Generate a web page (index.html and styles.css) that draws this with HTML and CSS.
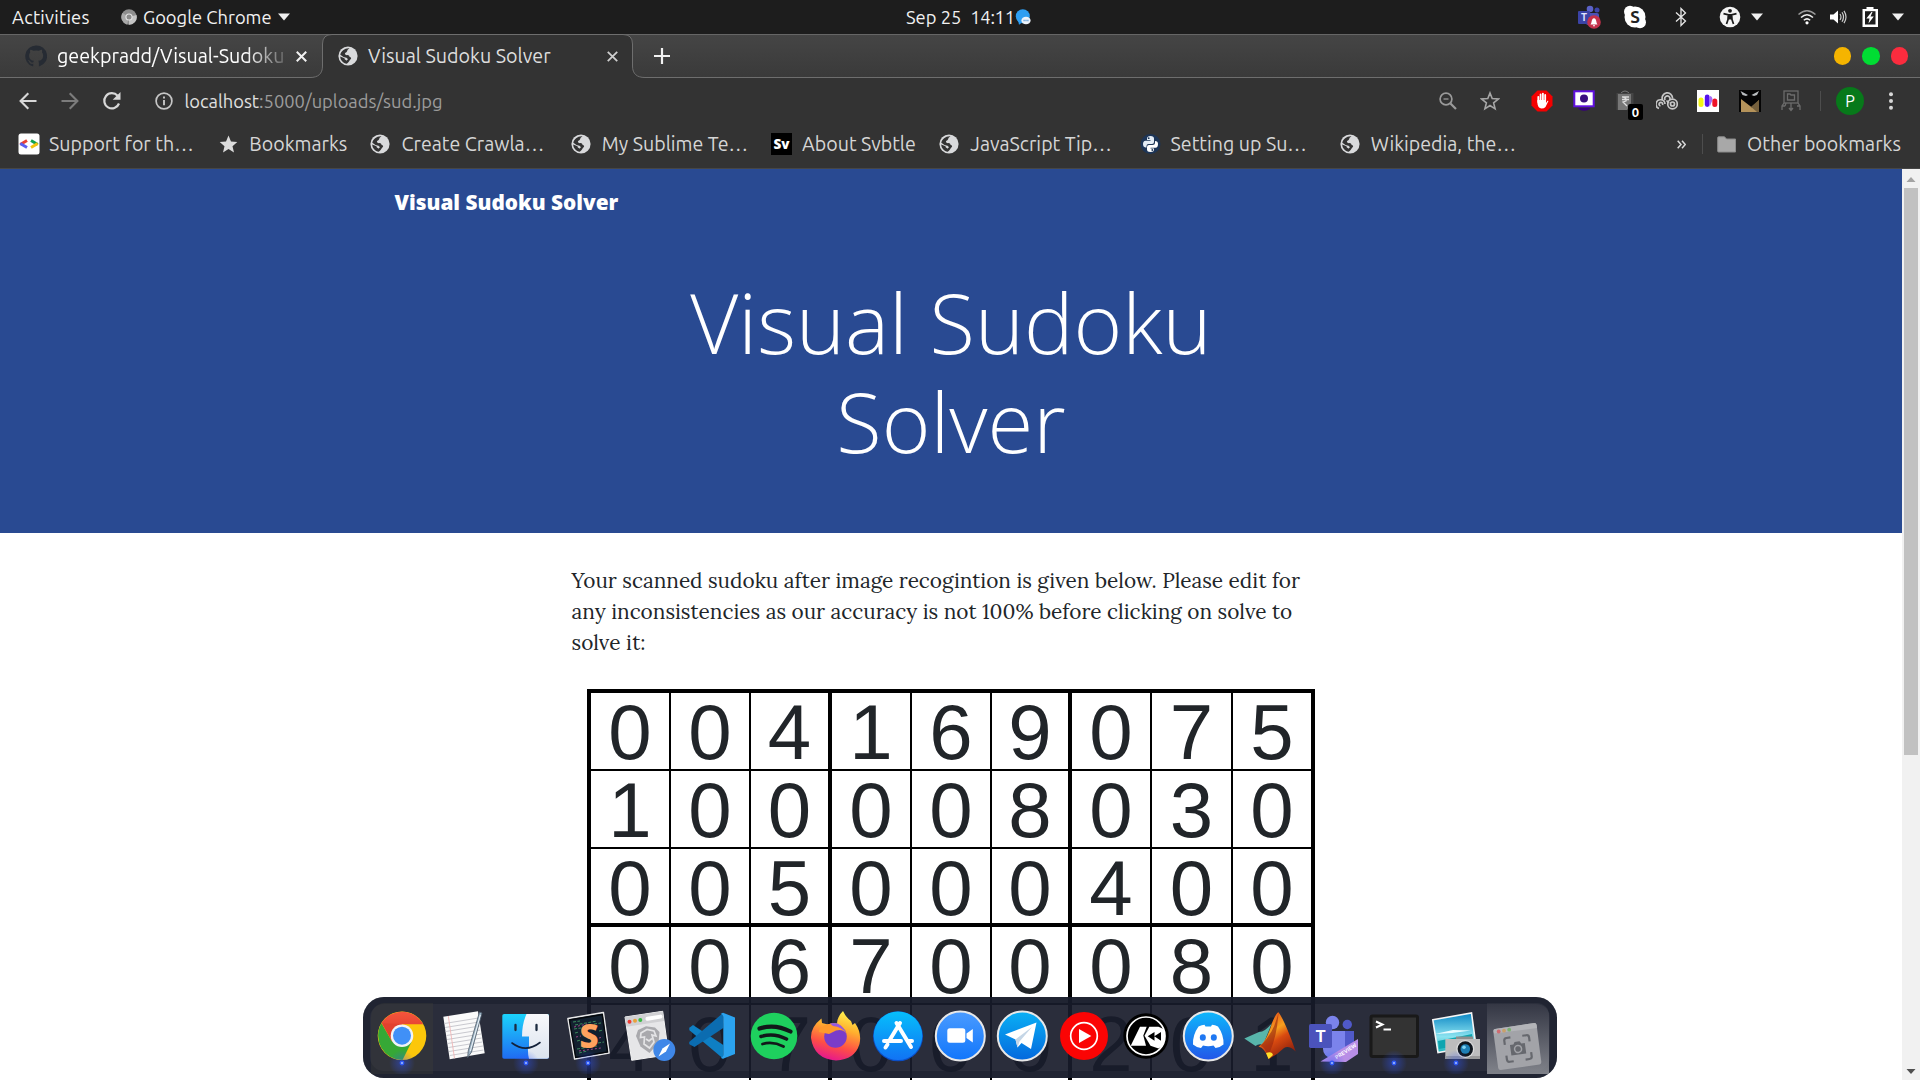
FILE: index.html
```html
<!DOCTYPE html>
<html lang="en">
<head>
<meta charset="utf-8">
<title>Visual Sudoku Solver</title>
<link rel="stylesheet" href="styles.css">
</head>
<body>
<svg width="0" height="0" class="defs">
  <defs>
    <symbol id="globe" viewBox="0 0 20 20"><circle cx="10" cy="10" r="9.600" fill="#d9dadc"/><path d="M11.500 2.300C8.500 4 9.800 5.700 7.800 6.600C6.300 7.300 6.900 8.800 8.300 9.200C10.200 8.700 11.500 9.600 11.600 11C13.200 11.200 13.600 12.400 12.600 13.300C11.600 14.300 11 16 8.800 17.700C5.200 17.300 2.300 14.200 2.200 10.500L6.500 12.300C6.500 14 8 13.500 8.200 14.800L10 13.200C9 12 8.500 11.500 5.500 11L2.300 8.800C3 5 7 1.800 11.500 2.300Z" fill="#333"/></symbol>
    <linearGradient id="gFinder" x1="0" y1="0" x2="0" y2="1"><stop offset="0" stop-color="#1bd3fb"/><stop offset="1" stop-color="#1f6cf2"/></linearGradient>
    <linearGradient id="gFinder2" x1="0" y1="0" x2="0" y2="1"><stop offset="0" stop-color="#f8f9fb"/><stop offset="1" stop-color="#dbe3ef"/></linearGradient>
    <linearGradient id="gFire" x1=".7" y1="0" x2=".4" y2="1"><stop offset="0" stop-color="#fff44f"/><stop offset=".35" stop-color="#ffb02e"/><stop offset=".7" stop-color="#ff4f45"/><stop offset="1" stop-color="#e5178f"/></linearGradient>
    <linearGradient id="gStore" x1="0" y1="0" x2="0" y2="1"><stop offset="0" stop-color="#06bffb"/><stop offset="1" stop-color="#1173f4"/></linearGradient>
    <linearGradient id="gZoom" x1="0" y1="0" x2="0" y2="1"><stop offset="0" stop-color="#4a9bff"/><stop offset="1" stop-color="#1176fb"/></linearGradient>
    <linearGradient id="gTele" x1="0" y1="0" x2="0" y2="1"><stop offset="0" stop-color="#0ab0f5"/><stop offset="1" stop-color="#0468dd"/></linearGradient>
    <linearGradient id="gDisc" x1="0" y1="0" x2="0" y2="1"><stop offset="0" stop-color="#0db8fc"/><stop offset="1" stop-color="#2355e8"/></linearGradient>
    <linearGradient id="gMat" x1=".3" y1="0" x2=".8" y2="1"><stop offset="0" stop-color="#e8501a"/><stop offset=".35" stop-color="#f6a01e"/><stop offset=".55" stop-color="#d94a10"/><stop offset="1" stop-color="#7c170c"/></linearGradient>
    <linearGradient id="gSky" x1="0" y1="0" x2="0" y2="1"><stop offset="0" stop-color="#0b86c4"/><stop offset=".6" stop-color="#8be3f0"/><stop offset="1" stop-color="#1eb3bb"/></linearGradient>
    <linearGradient id="gRed" x1="0" y1="0" x2="0" y2="1"><stop offset="0" stop-color="#f5553c"/><stop offset="1" stop-color="#dc3a2b"/></linearGradient>
    <radialGradient id="gDot"><stop offset="0" stop-color="#2f55ff" stop-opacity=".45"/><stop offset="1" stop-color="#2f55ff" stop-opacity="0"/></radialGradient>
    <symbol id="run" viewBox="0 0 40 40"><circle cx="20" cy="20" r="13" fill="url(#gDot)"/><circle cx="20" cy="20" r="2.400" fill="#2f59f5"/><circle cx="20" cy="20" r="1" fill="#a9c0ff"/></symbol>
  </defs>
</svg>

<header class="topbar">
  <span class="activities">Activities</span>
  <svg class="app-icon" viewBox="0 0 16 16"><circle cx="8" cy="8" r="7.700" fill="#8d8d8d"/><path d="M8 8L1.500 4A7.700 7.700 0 0 0 6 15.400Z" fill="#a9a9a9"/><path d="M8 8L15.500 6A7.700 7.700 0 0 1 8 15.700Z" fill="#c4c4c4"/><circle cx="8" cy="8" r="3.600" fill="#e4e4e4"/><circle cx="8" cy="8" r="2.500" fill="#8a8a8a"/></svg>
  <span class="app-name">Google Chrome</span>
  <svg class="caret" viewBox="0 0 12 8"><path d="M0 .5H12L6 7.500Z" fill="#f0f0f0"/></svg>
  <div class="clock"><span>Sep 25</span><span class="time">14:11</span>
    <svg width="16" height="16" viewBox="0 0 16 16"><path d="M3 11L4 15.700L8 13Z" fill="#2b9bf0"/><circle cx="7.800" cy="7.200" r="7" fill="#2f9ff2"/><ellipse cx="11" cy="11.500" rx="4.600" ry="3.800" fill="#eef4fb"/><path d="M8.500 11.500h5" stroke="#5b9bd8" stroke-width="1.600" stroke-dasharray="1.200 .7"/></svg>
  </div>
  <div class="tray">
    <span class="slot s46"><svg width="24" height="24" viewBox="0 0 24 24"><circle cx="13" cy="4" r="3.300" fill="#5b62c8"/><circle cx="20" cy="5" r="2.500" fill="#3c44a8"/><rect x="9" y="8" width="13" height="12" rx="2" fill="#4a50b5"/><rect x="1" y="6" width="12" height="13" rx="1" fill="#3b43a6"/><text x="4" y="16" class="ic-bold" font-size="10" fill="#e6e6ff">T</text><circle cx="17" cy="17" r="6.800" fill="#c4314b"/><path d="M13.500 19.500C15 18 14.300 13.500 17 13.300C19.700 13.500 19 18 20.500 19.500Z" fill="#fff"/><path d="M16 20.300h2v1h-2z" fill="#fff"/></svg></span>
    <span class="slot s46"><svg width="24" height="24" viewBox="0 0 24 24"><circle cx="12" cy="12" r="10.500" fill="#fff"/><circle cx="7" cy="6.800" r="6" fill="#fff"/><circle cx="17" cy="17.200" r="6" fill="#fff"/><text x="12" y="18" class="ic-bold" text-anchor="middle" font-size="17" fill="#222">S</text></svg></span>
    <span class="slot s46"><svg width="14" height="20" viewBox="0 0 14 20"><path d="M2 5.500L11.500 14L7 18.500V1.500L11.500 6L2 14.500" fill="none" stroke="#e8e8e8" stroke-width="1.300"/></svg></span>
    <span class="slot s40"><svg width="22" height="22" viewBox="0 0 22 22"><circle cx="11" cy="11" r="10.300" fill="#f5f5f5"/><circle cx="11" cy="4.800" r="1.900" fill="#1d1d1d"/><path d="M4.500 7.600L9.500 8.800H12.500L17.500 7.600M11 9V13M9.300 9L9 13.500L7.500 18M12.700 9L13 13.500L14.500 18" fill="none" stroke="#1d1d1d" stroke-width="1.700"/><path d="M9 8.500h4v5H9z" fill="#1d1d1d"/></svg></span>
    <span class="slot s14"><svg width="12" height="8" viewBox="0 0 12 8"><path d="M0 .5H12L6 7.500Z" fill="#f0f0f0"/></svg></span>
    <span class="slot s30 gap28"><svg width="20" height="16" viewBox="0 0 20 16" fill="none" stroke-width="1.500"><path d="M1.500 5.500Q10-2 18.500 5.500" stroke="#999"/><path d="M4 8.500Q10 3 16 8.500M6.800 11.300Q10 8.500 13.200 11.300" stroke="#eee"/><circle cx="10" cy="13.800" r="1.600" fill="#fff"/></svg></span>
    <span class="slot s32"><svg width="18" height="16" viewBox="0 0 18 16"><path d="M1 5.500H4.500L9 1.500V14.500L4.500 10.500H1Z" fill="#fff"/><path d="M11 5Q13 8 11 11M13 3.300Q16 8 13 12.700M15 1.800Q19 8 15 14.200" fill="none" stroke="#ccc" stroke-width="1.200"/></svg></span>
    <span class="slot s32"><svg width="18" height="22" viewBox="0 0 18 22"><path d="M5.500 1H12.500V3H17V21H1.500V3H5.500Z" fill="#fff"/><path d="M4 5.200H14.500V18.500H4Z" fill="#1d1d1d"/><path d="M10.500 6L5.300 12.500H8.500L7.500 17.500L12.800 10.500H9.500L11.500 6Z" fill="#fff"/></svg></span>
    <span class="slot s24"><svg width="12" height="8" viewBox="0 0 12 8"><path d="M0 .5H12L6 7.500Z" fill="#f0f0f0"/></svg></span>
  </div>
</header>

<div class="tabs">
  <div class="tab tab-idle">
    <svg width="22" height="22" viewBox="0 0 16 16"><path d="M8 .3a7.800 7.800 0 0 0-2.500 15.200c.4.100.5-.2.500-.4v-1.400c-2.200.5-2.700-1-2.700-1-.3-.9-.8-1.100-.8-1.100-.7-.5.100-.5.100-.5.800.1 1.200.8 1.200.8.700 1.200 1.800.9 2.300.7.100-.5.300-.9.500-1.100-1.800-.2-3.600-.9-3.600-3.900 0-.9.300-1.600.8-2.100-.1-.2-.4-1 .1-2.100 0 0 .7-.2 2.200.8a7.600 7.600 0 0 1 4 0c1.500-1 2.200-.8 2.200-.8.400 1.100.100 1.900.100 2.100.5.500.8 1.200.8 2.100 0 3-1.900 3.700-3.600 3.900.3.200.5.700.5 1.500v2.100c0 .2.100.5.600.4A7.800 7.800 0 0 0 8 .3Z" fill="#262b33"/></svg>
    <span class="tab-title fade">geekpradd/Visual-Sudoku</span>
    <svg class="x" viewBox="0 0 10 10"><path d="M.7.7L9.300 9.300M9.300.7L.7 9.300" stroke="#f2f2f2" stroke-width="1.800"/></svg>
  </div>
  <div class="tab tab-active">
    <svg class="tab-shape" width="335" height="44" viewBox="0 0 335 44"><path d="M0 44V43.500C8 43.500 12.500 40 12.500 32V10Q12.500 .5 22 .5H313Q322.500 .5 322.500 10V32C322.500 40 327 43.500 335 43.500V44Z" fill="#333"/><path d="M0 43.500C8 43.500 12.500 40 12.500 32V10Q12.500 .5 22 .5H313Q322.500 .5 322.500 10V32C322.500 40 327 43.500 335 43.500" fill="none" stroke="#6e6e6e"/></svg>
    <svg class="ico" width="20" height="20"><use href="#globe"/></svg>
    <span class="tab-title">Visual Sudoku Solver</span>
    <svg class="x" viewBox="0 0 10 10"><path d="M.7.7L9.300 9.300M9.300.7L.7 9.300" stroke="#cfcfcf" stroke-width="1.600"/></svg>
  </div>
  <svg class="plus" width="16" height="16" viewBox="0 0 16 16"><path d="M8 0V16M0 8H16" stroke="#f2f2f2" stroke-width="2.200"/></svg>
  <div class="winbtns"><i class="yellow"></i><i class="green"></i><i class="red"></i></div>
</div>

<div class="toolbar">
  <svg class="nav" width="18" height="18" viewBox="0 0 18 18"><path d="M17.500 9H2M9.300 1.300L1.600 9L9.300 16.700" fill="none" stroke="#d8d8d8" stroke-width="2.100"/></svg>
  <svg class="nav" width="18" height="18" viewBox="0 0 18 18"><path d="M.5 9H16M8.700 1.300L16.400 9L8.700 16.700" fill="none" stroke="#7c7c7c" stroke-width="2.100"/></svg>
  <svg class="nav reload" width="20" height="20" viewBox="0 0 20 20"><path d="M17 12.500A7.600 7.600 0 1 1 15.600 4.800" fill="none" stroke="#d8d8d8" stroke-width="2.200"/><path d="M18.500 1V8.800H10.700Z" fill="#d8d8d8"/></svg>
  <svg class="info" width="18" height="18" viewBox="0 0 18 18"><circle cx="9" cy="9" r="7.900" fill="none" stroke="#c6c6c6" stroke-width="1.700"/><path d="M9 8V13.200M9 4.500V6.500" stroke="#c6c6c6" stroke-width="1.900"/></svg>
  <span class="url">localhost<span class="path">:5000/uploads/sud.jpg</span></span>
  <div class="tools">
    <span class="slot s42"><svg width="18" height="18" viewBox="0 0 18 18" fill="none" stroke="#9a9a9a"><circle cx="7" cy="7" r="5.900" stroke-width="1.700"/><path d="M11.500 11.500L17 17" stroke-width="2.200"/><path d="M4.500 7H9.500" stroke-width="1.300"/></svg></span>
    <span class="slot s42"><svg width="20" height="20" viewBox="0 0 20 20"><path d="M10 2L12.200 7.600L18.300 8L13.600 11.900L15.100 17.800L10 14.500L4.900 17.800L6.400 11.900L1.700 8L7.800 7.600Z" fill="none" stroke="#a6a6a6" stroke-width="1.600"/></svg></span>
    <span class="slot ext first"><svg width="22" height="22" viewBox="0 0 22 22"><path d="M6.500 .5H15.500L21.500 6.500V15.500L15.500 21.500H6.500L.5 15.500V6.500Z" fill="#f40000"/><path d="M7.300 12V6.800M9.600 11V4.400M11.900 11V3.600M14.200 11V5" stroke="#fff" stroke-width="1.800" stroke-linecap="round"/><path d="M6.400 10H15V13L16.500 10.800Q17.800 10.300 17.200 11.500L14.500 17Q13 18.500 10.500 18.500Q6.700 18 6.400 13Z" fill="#fff"/></svg></span>
    <span class="slot ext"><svg width="22" height="22" viewBox="0 0 22 22"><rect x="1.300" y="1.300" width="19.400" height="15" fill="#fff" stroke="#6010e0" stroke-width="2"/><circle cx="11" cy="8.600" r="4" fill="#3a0f80"/><path d="M5 18H17.500Q16 20.800 11 20.800Q6.500 20.800 5 18Z" fill="#36007a"/></svg></span>
    <span class="slot ext"><svg width="22" height="22" viewBox="0 0 22 22"><path d="M7 3Q11-1 15 3" stroke="#777" fill="none"/><rect x="2.500" y="3" width="17" height="17" fill="#454545"/><path d="M4 4H17V13L13 20H4Z" fill="#777"/><path d="M8 7H15M8 9.500H15M9 7Q13 8 12 11L9 12L13 16" stroke="#ddd" fill="none" stroke-width="1.300"/></svg><b class="badge">0</b></span>
    <span class="slot ext"><svg width="22" height="18" viewBox="0 0 22 18" fill="none" stroke="#c6c6c6" stroke-width="1.700"><path d="M3 16.500A4.500 4.500 0 1 1 9 12M4.500 14A1.800 1.800 0 1 1 6.500 13M6.500 8A5.200 5.200 0 1 1 16.500 6.500M9.200 8A2.600 2.600 0 1 1 13.500 8M10.500 8.500L13 11"/><circle cx="16.500" cy="12" r="4.800"/><circle cx="16.500" cy="12" r="2"/></svg></span>
    <span class="slot ext"><svg width="22" height="22" viewBox="0 0 22 22"><path d="M0 0H22V22H0Z" fill="#fff"/><rect x="1.500" y="7.500" width="5" height="9.500" rx="2.500" fill="#f3f514"/><rect x="7.800" y="4.500" width="4.800" height="12.500" rx="2.400" fill="#5311ee"/><path d="M12.600 6Q15.500 6 15.500 10L12.600 17Z" fill="#a66bf5"/><rect x="15.300" y="8.500" width="5" height="8.500" rx="2.500" fill="#ee1228"/></svg></span>
    <span class="slot ext"><svg width="22" height="22" viewBox="0 0 22 22"><path d="M0 0H22V22H0Z" fill="#050505"/><path d="M2 22V9L13 17.500L20 10V22Z" fill="#b5935a"/><path d="M12 16.700L20 10V22H18Z" fill="#75603c"/><path d="M1.500 1L9 5L7 6L3.500 5ZM20 1L12.500 5L15 6L18 5Z" fill="#b9bcbf"/></svg></span>
    <span class="slot ext"><svg width="22" height="22" viewBox="0 0 22 22" fill="none" stroke="#6c6c6c" stroke-width="1.300"><rect x="4" y="1" width="14" height="12"/><path d="M7.500 4H10L11 5H14.500V10H7.500ZM4 13L2 16V20M2 16H5M18 13L20 16V20M20 16H17M11 13V20M9 18L11 20.500L13 18M6 13L5 16"/></svg></span>
    <span class="slot s17"><i class="vline"></i></span>
    <span class="slot s42"><span class="avatar">P</span></span>
    <span class="slot s40"><svg width="6" height="18" viewBox="0 0 6 18"><g fill="#d8d8d8"><circle cx="3" cy="2.200" r="2"/><circle cx="3" cy="9" r="2"/><circle cx="3" cy="15.800" r="2"/></g></svg></span>
  </div>
</div>

<div class="bookmarks">
  <div class="bm"><svg class="bi" viewBox="0 0 22 22"><rect x=".5" y=".5" width="21" height="21" rx="2.500" fill="#fff"/><g fill="none" stroke-width="3"><path d="M2.300 11.500L9 7.500" stroke="#ea4335"/><path d="M2.300 10.500L9 14.500" stroke="#5b5ff0"/><path d="M19.700 11.500L13 7.500" stroke="#12a150"/><path d="M19.700 10.500L13 14.500" stroke="#f4c20d"/></g></svg><span>Support for th…</span></div>
  <div class="bm sm"><svg class="bi" viewBox="0 0 22 22"><path d="M10.500 2.500L13 8.500L19.300 9L14.500 13.200L16 19.400L10.500 16L5 19.400L6.500 13.200L1.700 9L8 8.500Z" fill="#dcdcdc"/></svg><span>Bookmarks</span></div>
  <div class="bm"><svg class="bi" viewBox="0 0 22 22"><use href="#globe" x="0" y="1" width="20" height="20"/></svg><span>Create Crawla…</span></div>
  <div class="bm"><svg class="bi" viewBox="0 0 22 22"><use href="#globe" x="0" y="1" width="20" height="20"/></svg><span>My Sublime Te…</span></div>
  <div class="bm md"><svg class="bi" viewBox="0 0 22 22"><path d="M0 0H21V22H0Z" fill="#000"/><text x="10.500" y="16" text-anchor="middle" class="ic-heavy" font-size="13.500" fill="#fff">Sv</text></svg><span>About Svbtle</span></div>
  <div class="bm"><svg class="bi" viewBox="0 0 22 22"><use href="#globe" x="0" y="1" width="20" height="20"/></svg><span>JavaScript Tip…</span></div>
  <div class="bm"><svg class="bi" viewBox="0 0 22 22"><circle cx="10.500" cy="11" r="10" fill="#1d3557"/><path d="M7 5.500Q7 3 10.500 3Q14 3 14 5.500V9Q14 11 12 11H8.500Q6.500 11 6.500 13V14.500H5.500Q3 14 3 11Q3 8 5.500 7.700H10.500V7H7Z" fill="#e4edf6"/><path d="M14 16.500Q14 19 10.500 19Q7 19 7 16.500V14Q7 12 9 12H12.500Q15 12 15 9.500V8Q18 8 18 11Q18 14.500 15.500 14.800H10.500V15.500H14Z" fill="#fff"/><circle cx="8.700" cy="5.200" r=".9" fill="#1d3557"/><circle cx="12.300" cy="17" r=".9" fill="#1d3557"/></svg><span>Setting up Su…</span></div>
  <div class="bm"><svg class="bi" viewBox="0 0 22 22"><use href="#globe" x="0" y="1" width="20" height="20"/></svg><span>Wikipedia, the…</span></div>
  <div class="bm-right">
    <svg width="9" height="9" viewBox="0 0 9 9"><path d="M.7 .7L4 4.500L.7 8.300M5 .7L8.300 4.500L5 8.300" fill="none" stroke="#dadada" stroke-width="1.500"/></svg>
    <i class="vline"></i>
    <svg class="folder" width="20" height="17" viewBox="0 0 20 17"><path d="M1.500 .8H7.500L9.500 3H18.500V16H1.500Q.7 16 .7 15V1.800Q.7 .8 1.500 .8Z" fill="#a8a8a8" stroke="#8c8c8c"/></svg>
    <span>Other bookmarks</span>
  </div>
</div>

<div class="viewport">
  <main class="page">
    <div class="masthead">
      <nav class="brand">Visual Sudoku Solver</nav>
      <h1>Visual Sudoku Solver</h1>
    </div>
    <div class="content">
      <p>Your scanned sudoku after image recogintion is given below. Please edit for any inconsistencies as our accuracy is not 100% before clicking on solve to solve it:</p>
      <div class="grid">
        <b>0</b><b>0</b><b>4</b><b>1</b><b>6</b><b>9</b><b>0</b><b>7</b><b>5</b>
        <b>1</b><b>0</b><b>0</b><b>0</b><b>0</b><b>8</b><b>0</b><b>3</b><b>0</b>
        <b>0</b><b>0</b><b>5</b><b>0</b><b>0</b><b>0</b><b>4</b><b>0</b><b>0</b>
        <b>0</b><b>0</b><b>6</b><b>7</b><b>0</b><b>0</b><b>0</b><b>8</b><b>0</b>
        <b>4</b><b>0</b><b>7</b><b>0</b><b>0</b><b>0</b><b>2</b><b>0</b><b>1</b>
      </div>
    </div>
  </main>
  <div class="scrollbar">
    <svg width="18" height="19" viewBox="0 0 18 19"><path d="M9 8L13.500 13H4.500Z" fill="#a3a3a3"/></svg>
    <i class="thumb"></i>
    <svg class="down" width="18" height="18" viewBox="0 0 18 18"><path d="M9 12L13.500 7H4.500Z" fill="#505050"/></svg>
  </div>
</div>

<div class="dock">
  <svg class="tile warm" viewBox="0 0 62 71">
    <circle cx="31" cy="32.700" r="24.300" fill="#fcc70a"/>
    <path d="M31 32.700L10.500 20A24.300 24.300 0 0 1 52.200 21.300L31 21.300Z" fill="url(#gRed)"/>
    <path d="M31 32.700L40.500 39L31.500 57A24.300 24.300 0 0 1 10.500 20.300L21 38.500Z" fill="#36a836"/>
    <path d="M10.700 20.300L31 21L21 38.500Z" fill="#e2412e"/>
    <circle cx="31" cy="32.700" r="11.300" fill="#f1f3f6"/><circle cx="31" cy="32.700" r="9" fill="#4090f7"/>
    <use href="#run" x="11" y="40" width="40" height="40"/>
  </svg>
  <svg class="tile" viewBox="0 0 62 71">
    <path d="M10.300 13.700L45 8.300L51.700 50.300L16.700 56.300Z" fill="#fafafa"/>
    <path d="M11.500 20.500L45.500 15M12.200 24.500L46 19M12.800 28.500L46.700 23M13.500 32.500L47.300 27M14.100 36.500L48 31M14.700 40.500L48.600 35M15.400 44.500L49.200 39M16 48.500L49.900 43M16.700 52.500L50.500 47" stroke="#c9c9cf"/>
    <path d="M15.300 13L21.500 55.400" stroke="#f0b0b0" stroke-width=".8"/>
    <path d="M46.500 9L49 10L38.500 49L34.700 54.500L35.200 48Z" fill="#9db4c6" stroke="#4c5a68" stroke-width=".8"/><path d="M47.300 12L37.300 48" stroke="#eef4f8"/>
  </svg>
  <svg class="tile" viewBox="0 0 62 71">
    <rect x="7.300" y="11" width="46.700" height="44.700" rx="1.800" fill="url(#gFinder)"/>
    <path d="M31.500 11H52.200Q54 11 54 13V54Q54 55.700 52 55.700H34Q32.700 51 33 45H34V33.500H27Q27 21 31.500 11Z" fill="url(#gFinder2)"/>
    <path d="M20.500 22V27M41.500 22V27" stroke="#1c2b40" stroke-width="2.300" stroke-linecap="round"/><path d="M17 40Q31 50.500 45 39.500" fill="none" stroke="#13213a" stroke-width="1.600" stroke-linecap="round"/>
    <use href="#run" x="11" y="40" width="40" height="40"/>
  </svg>
  <svg class="tile" viewBox="0 0 62 71">
    <path d="M11 15.500L46.300 9.500L52 50L17.700 56Z" fill="#12202f" stroke="#e9e9e9" stroke-width="1.700" stroke-linejoin="round"/>
    <path d="M12.500 17L45.300 11.500L50.500 49L18.700 54.500Z" fill="none" stroke="#05080c" stroke-width="1.500"/>
    <path d="M16 19L23 18M18 22L40 18M17 26L24 25M37 21L44 20M18 30L22 29M42 28L46 27M20 38L24 37M41 40L47 39M20 46L40 43M22 50L30 48" stroke="#3b8a5c" stroke-width="1" stroke-dasharray="3 1.500"/><path d="M17 24L30 21M19 34L24 33M42 35L46 34M22 48L44 45" stroke="#a0448a" stroke-dasharray="2 2"/>
    <text x="32" y="45" text-anchor="middle" class="ic-heavy" font-size="33" fill="#ffa25e">S</text>
    <use href="#run" x="11" y="40" width="40" height="40"/>
  </svg>
  <svg class="tile" viewBox="0 0 62 71">
    <path d="M6 14L43.700 8.300L49.700 51.700L12.700 57.300Z" fill="#e6e6e8" stroke="#f4f4f4" stroke-width="1" stroke-linejoin="round"/>
    <path d="M6 14L43.700 8.300L45 18L7.500 23.700Z" fill="#d0d0d3"/>
    <path d="M28.500 15.800L41.500 13.600" stroke="#fff" stroke-width="4" stroke-linecap="round"/>
    <circle cx="10.500" cy="18.700" r="2" fill="#ee3b34"/><circle cx="16" cy="17.700" r="2" fill="#e9a13a"/><circle cx="21.300" cy="16.900" r="2" fill="#3cba45"/>
    <path d="M19 27L27 23.300L36 24.500L40.500 29L39.500 40L30.500 50L21.500 43.500L17 33Z" fill="#a9a9ad"/><path d="M22 30L28 26.500L35 28L37 33L33 32L35 39L30.500 45L25 41L25.500 34L21.500 34.500ZM27 36L30 38L33 35.500" fill="none" stroke="#e4e4e6" stroke-width="1.700"/>
    <circle cx="45.300" cy="47" r="11" fill="#3f87e8"/><path d="M51 40.500L47 48.500L39.500 53.500L43.500 45.500Z" fill="#fff"/>
  </svg>
  <svg class="tile" viewBox="0 0 62 71">
    <path d="M8.700 24.500Q7.500 26 8.700 27.500L42.300 55.700V42L12 22Z" fill="#0e7fc4"/><path d="M8.700 41.500Q7.500 40 8.700 38.500L42.300 9.700V25L13.500 44Z" fill="#0b6cb0"/><path d="M42 9.700L54 14.500V51L42 55.700Q40.500 55.500 39.500 54.500Q42.300 55 42.300 51.500V14Q42 11 39.500 11Z" fill="#2ba3ef"/>
  </svg>
  <svg class="tile" viewBox="0 0 62 71">
    <circle cx="31" cy="33" r="23.300" fill="#1ed05e"/><g fill="none" stroke="#12181a" stroke-linecap="round"><path d="M16.500 25.500Q32 20.500 47.500 28.500" stroke-width="4.200"/><path d="M18 33.500Q31 29.500 43.500 36" stroke-width="3.600"/><path d="M19.500 41Q30 38 40.500 43.500" stroke-width="2.800"/></g>
  </svg>
  <svg class="tile" viewBox="0 0 62 71">
    <path d="M6 35Q5.500 24 16.500 15.500L17 20L23 21.500Q28 19 32 20.500Q32.500 13 38 8Q41 14.500 46 18L47.500 22L50 20Q57 30 54.500 41Q50 56.500 31 57.500Q9 56 6 35Z" fill="url(#gFire)"/>
    <circle cx="30.500" cy="33.500" r="11.300" fill="#7a3cc9"/><path d="M20 22Q30 18 38 24L43 34Q40 25 31 27.500L24 31L14 29Q13 26 20 22Z" fill="#ff9a2b"/><path d="M25 20.500Q36 18 41 30Q37 24 28 23Z" fill="#9459e0"/>
  </svg>
  <svg class="tile" viewBox="0 0 62 71">
    <circle cx="31" cy="33.300" r="25" fill="#0a4fc9"/><circle cx="31" cy="32.700" r="24.300" fill="url(#gStore)"/><g stroke="#fff" stroke-width="4" stroke-linecap="round"><path d="M33 20L23 36.500M29.500 20L44 44M17 38H34M41 38H45M20.500 41.500L18.500 44.500"/></g>
  </svg>
  <svg class="tile" viewBox="0 0 62 71">
    <circle cx="31.300" cy="33" r="24.500" fill="url(#gZoom)" stroke="#e8e8e8" stroke-width="2"/><rect x="18.300" y="25.300" width="18" height="14.500" rx="2.500" fill="#fff"/><path d="M37.500 30.500L43.800 26V39.500L37.500 35Z" fill="#fff"/>
  </svg>
  <svg class="tile" viewBox="0 0 62 71">
    <circle cx="31.300" cy="33" r="24.500" fill="url(#gTele)" stroke="#e8e8e8" stroke-width="2"/><path d="M14 31.500L45.500 19.500L40 46L30.500 40L26.500 44.500L24.500 36.500Z" fill="#fff"/><path d="M24.500 36.500L41 24L28.500 38.500L26.500 44.500Z" fill="#c5d6e6"/>
  </svg>
  <svg class="tile" viewBox="0 0 62 71">
    <circle cx="31" cy="33" r="24" fill="#fb0404"/><circle cx="31" cy="33" r="13.300" fill="none" stroke="#fff" stroke-width="1.700"/><path d="M26 26V40L38.300 33Z" fill="#fff"/>
  </svg>
  <svg class="tile" viewBox="0 0 62 71">
    <circle cx="31" cy="33" r="22.700" fill="#000"/><circle cx="31" cy="33" r="19" fill="none" stroke="#fff" stroke-width="1.700"/><path d="M15.700 42.700L25 23.700H31.700L28.300 32.500L31 42.700Z" fill="#fff"/><path d="M34.300 23.700H43.500L48.500 26Q52 34 47.500 43L43.500 45.500L35.500 42.700L29.500 32.800Z" fill="#fff"/><path d="M39.500 29V37.700L32.700 33.300ZM46 29V37.700L39.300 33.300Z" fill="#000"/>
  </svg>
  <svg class="tile" viewBox="0 0 62 71">
    <circle cx="31.300" cy="33" r="24.500" fill="url(#gDisc)" stroke="#e8e8e8" stroke-width="2"/><path d="M21.500 23.500Q25 22 27.500 21.800L28.500 23.500H34L35 21.800Q38 22 41 23.500Q47 32 46.500 41.500Q43 44.500 38.500 45L36.500 42.500Q31.300 44 26 42.500L24 45Q19.500 44.500 16 41.500Q15.500 32 21.500 23.500Z" fill="#fff"/><ellipse cx="25.800" cy="34.500" rx="3" ry="3.300" fill="#1f78f2"/><ellipse cx="36.800" cy="34.500" rx="3" ry="3.300" fill="#1f78f2"/>
  </svg>
  <svg class="tile" viewBox="0 0 62 71">
    <path d="M5.300 35.500L20 29Q26 29 33 20L24 42Q20 40 16.500 43Z" fill="#58b5ab"/><path d="M39.500 9.300Q46 18 56.700 48.500Q50 42 45 45Q38 52 29.500 56Q26 45 19.500 43.500Q27 40 33 20Q37 10 39.500 9.300Z" fill="url(#gMat)"/><path d="M39.500 9.300Q35 30 21.500 43Q26 44 29 53Q38 35 39.500 9.300Z" fill="#9a2a10" opacity=".65"/><path d="M27 50Q33 48 34 52L29.500 56Z" fill="#ffe02a"/>
  </svg>
  <svg class="tile" viewBox="0 0 62 71">
    <circle cx="31.500" cy="19.500" r="6.700" fill="#7b83eb"/><circle cx="46.300" cy="21.500" r="4.700" fill="#5059c9"/><path d="M37 28H53V42Q51 50 44 49Z" fill="#5059c9"/><path d="M22 28H44V48Q41 57 31 56Q22 53 22 46Z" fill="#7b83eb"/><path d="M19.500 58.500L57 36V51L45 59Z" fill="#b88ee6"/><text transform="translate(35.500 56.500) rotate(-33)" class="ic-bold" font-size="5.500" fill="#fff">PREVIEW</text><rect x="8" y="21" width="23" height="24" rx="1.800" fill="#4b53bc"/><text x="19.500" y="39.300" text-anchor="middle" class="ic-bold" font-size="17" fill="#fff">T</text>
    <use href="#run" x="11" y="40" width="40" height="40"/>
  </svg>
  <svg class="tile" viewBox="0 0 62 71">
    <rect x="8" y="13" width="46.500" height="40.500" rx="1.500" fill="#333" stroke="#191919" stroke-width="3"/><path d="M13 18.500L19.500 21.500L13 24.500" fill="none" stroke="#fff" stroke-width="2"/><path d="M20.500 26.500H28" stroke="#fff" stroke-width="2"/>
    <use href="#run" x="11" y="40" width="40" height="40"/>
  </svg>
  <svg class="tile" viewBox="0 0 62 71">
    <path d="M7.800 16.800L46.500 10L51 43L13 49.500Z" fill="url(#gSky)" stroke="#f5f5f5" stroke-width="1.600"/><path d="M13 38L47 31L48.500 40L14 46Z" fill="#0fa5b0"/><path d="M10 31L28 27L46 27.500L27 30Z" fill="#e9fbff"/>
    <rect x="20.300" y="36" width="34.700" height="20" fill="#bdbdbd"/><path d="M31 36V33.500H48V36Z" fill="#8e8e8e"/><path d="M20.300 53H55V56H20.300Z" fill="#9a9a9a"/><circle cx="40.300" cy="46" r="9" fill="#dcdcdc"/><circle cx="40.300" cy="46" r="7.700" fill="#11181f"/><circle cx="40.300" cy="46" r="4.800" fill="#1e7fb5"/><circle cx="39" cy="44.300" r="1.800" fill="#7fd4f2"/>
    <use href="#run" x="11" y="40" width="40" height="40"/>
  </svg>
  <svg class="tile launching" viewBox="0 0 62 71">
    <path d="M8 26L47.500 20Q49.300 20 49.600 22L54.300 59Q54.300 61 52.500 61.500L13.500 67Q11.500 67 11.200 65L6.300 28.500Q6.300 26.300 8 26Z" fill="#a2a3a8"/><path d="M7 30.500L6.500 27.500Q6.500 26.300 8 26L47.500 20Q49.300 20 49.600 22L50 25Z" fill="#b3b4b8"/><circle cx="11.700" cy="28.500" r="1.900" fill="#cf6a70"/><circle cx="17" cy="27.700" r="1.900" fill="#c9a06a"/><circle cx="22.200" cy="26.700" r="1.900" fill="#7ab070"/>
    <g transform="rotate(-8 31 45.500)" fill="none" stroke="#66686e" stroke-width="2.200"><path d="M18.500 40V36Q18.500 33.500 21 33.500H25M37 33.500H41Q43.500 33.500 43.500 36V40M43.500 51V55Q43.500 57.500 41 57.500H37M25 57.500H21Q18.500 57.500 18.500 55V51"/><path d="M23.500 41H27L28.500 38.500H33.500L35 41H38.500V51.500H23.500Z" fill="#66686e" stroke="none"/><circle cx="31" cy="46" r="3.500" stroke="#a2a3a8" stroke-width="1.500"/></g>
  </svg>
</div>
</body>
</html>
```
FILE: styles.css
```css
* { box-sizing: border-box; }
html, body { margin: 0; height: 100%; overflow: hidden; }
body {
  display: flex; flex-direction: column;
  width: 1920px; height: 1080px;
  background: #fff; color: #212529;
  font-family: Ubuntu, "Noto Sans", sans-serif;
}
svg { display: block; flex: none; }
.defs { position: absolute; }
.ic-bold { font-family: Ubuntu, "Open Sans", sans-serif; font-weight: 700; }
.ic-heavy { font-family: "Open Sans", sans-serif; font-weight: 800; }
.slot { display: flex; align-items: center; justify-content: center; flex: none; position: relative; }
.s14 { width: 14px; } .s17 { width: 17px; } .s24 { width: 24px; } .s30 { width: 30px; }
.s32 { width: 32px; } .s40 { width: 40px; } .s42 { width: 42px; } .s46 { width: 46px; }
.gap28 { margin-left: 28px; }

.topbar {
  display: flex; align-items: center; flex: none;
  height: 34px; padding-left: 12px;
  background: #1d1d1d; color: #f2f2f2; font-size: 18.33px; line-height: 34px;
}
.activities { width: 109px; letter-spacing: .25px; }
.app-icon { width: 16px; height: 16px; }
.app-name { margin-left: 6px; width: 128px; white-space: nowrap; }
.caret { width: 12px; height: 8px; margin-left: 7px; }
.clock { display: flex; align-items: center; margin-left: 616px; white-space: nowrap; }
.clock .time { margin-left: 9px; letter-spacing: -.3px; }
.tray { display: flex; align-items: center; margin-left: auto; padding-right: 10px; }
.tray .s40 { margin-left: 6px; }

.tabs {
  display: flex; align-items: center; flex: none;
  height: 44px; border-top: 1px solid #666; border-bottom: 1px solid #6e6e6e;
  background: linear-gradient(#454545, #3a3a3a);
}
.tab { display: flex; align-items: center; flex: none; height: 42px; position: relative; font-size: 19.7px; }
.tab-idle { width: 310px; padding-left: 25px; color: #fff; }
.tab-title { white-space: nowrap; }
.tab-idle .tab-title { margin-left: 10px; width: 230px; overflow: hidden; }
.fade { -webkit-mask-image: linear-gradient(90deg, #000 82%, rgba(0,0,0,.15)); mask-image: linear-gradient(90deg, #000 82%, rgba(0,0,0,.15)); }
.x { width: 11px; height: 11px; margin-left: 9px; }
.tab-active { width: 335px; padding-left: 28px; color: #dedede; }
.tab-shape { position: absolute; left: 0; top: -1px; }
.tab-active .ico, .tab-active .tab-title, .tab-active .x { position: relative; }
.tab-active .tab-title { margin-left: 10px; width: 230px; }
.plus { margin-left: 9px; }
.winbtns { display: flex; gap: 11px; margin-left: auto; padding-right: 12px; }
.winbtns i { width: 17.5px; height: 17.5px; border-radius: 50%; }
.yellow { background: #f5b400; } .green { background: #00dd33; } .red { background: #fb2c3e; }

.toolbar { display: flex; align-items: center; flex: none; height: 47px; padding: 0 0 1px 19px; background: #333; }
.nav + .nav { margin-left: 24px; }
.nav.reload { margin-left: 23px; }
.info { margin-left: 32.5px; }
.url { margin-left: 12px; font-size: 18.33px; color: #e0e0e0; }
.path { color: #9c9c9c; }
.tools { display: flex; margin-left: auto; padding-right: 9px; height: 30px; align-items: center; }
.ext { width: 41.5px; }
.ext.first { margin-left: 11px; }
.badge { position: absolute; right: 3px; top: 14px; width: 15px; height: 16px; border-radius: 2px; background: #000; color: #fff; font-size: 13px; line-height: 16px; text-align: center; }
.vline { width: 1px; height: 20px; background: #4d4d4d; }
.avatar { width: 28px; height: 28px; border-radius: 50%; background: #07791a; color: #fff; font-size: 16px; line-height: 28px; text-align: center; }

.bookmarks {
  display: flex; align-items: center; flex: none;
  height: 44px; padding: 0 19px 5px 18px; border-bottom: 1px solid #464646;
  background: #333; color: #d6d6d6; font-size: 19.6px; white-space: nowrap;
}
.bm { display: flex; align-items: center; flex: none; width: 200.3px; }
.bm.sm { width: 152.2px; } .bm.md { width: 168.2px; }
.bi { width: 22px; height: 22px; margin-right: 9px; }
.bm-right { display: flex; align-items: center; margin-left: auto; }
.bm-right .vline { margin: 0 14px 0 16px; }
.folder { margin-right: 10px; }

.viewport { display: flex; flex: 1; min-height: 0; overflow: hidden; }
.page { width: 1902px; flex: none; }
.masthead { height: 364px; background: #294a92; color: #fff; font-family: "Open Sans", sans-serif; overflow: hidden; }
.brand { padding: 19px 0 0 394.5px; font-size: 20.8px; line-height: 28px; font-weight: 800; }
h1 { width: 600px; margin: 56px auto 0; font-size: 83.2px; line-height: 99px; font-weight: 300; text-align: center; }
.content { width: 760px; margin-left: 571px; font-family: Lora, "Liberation Serif", serif; }
p { width: 735px; margin: 0; padding: 32px 0 0 .5px; font-size: 20.8px; line-height: 31.2px; }
.grid {
  display: grid; grid-template-columns: 80px 80px 81px 80px 80px 80px 80px 81px 82px; grid-auto-rows: 78px;
  width: 728px; height: 600px; margin: 30px 0 0 16px;
  border: 4px solid #000; border-right: 0;
}
.grid b {
  border-right: 2px solid #000; border-bottom: 2px solid #000;
  font: 400 78px/78px "Liberation Sans", Arial, sans-serif; text-align: center;
}
.grid b:nth-child(3n) { border-right-width: 4px; }
.grid b:nth-child(n+19):nth-child(-n+27) { border-bottom-width: 4px; }

.scrollbar { display: flex; flex-direction: column; width: 18px; background: #f1f1f1; }
.thumb { width: 14px; height: 567px; margin-left: 2px; background: #c1c1c1; }
.down { margin-top: auto; }

.dock {
  position: absolute; left: 363px; top: 997px;
  display: flex; width: 1194px; height: 81px; padding: 6px 8px 4px;
  border-radius: 21px; background: rgba(24,27,42,.92);
}
.dock::before { content: ""; position: absolute; inset: 0; border: 7px solid rgba(20,26,40,.45); border-radius: 21px; }
.tile { position: relative; width: 62px; height: 71px; }
.warm { background: rgba(62,62,56,.35); border-radius: 14px 0 0 0; }
.launching { background: linear-gradient(rgba(130,132,140,.1), rgba(150,152,158,.8)); border-radius: 0 12px 0 0; }
```
